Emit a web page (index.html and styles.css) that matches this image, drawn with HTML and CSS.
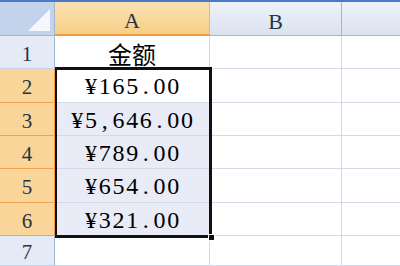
FILE: index.html
```html
<!DOCTYPE html>
<html>
<head>
<meta charset="utf-8">
<link rel="stylesheet" href="styles.css">
</head>
<body>
<div class="sheet">
  <div class="topbar"></div>
  <div class="grid">
    <div class="corner"><div class="tri"></div></div>
    <div class="colhead active">A</div>
    <div class="colhead">B</div>
    <div class="colhead last"></div>

    <div class="rowhead">1</div>
    <div class="cell title">金额</div>
    <div class="cell"></div>
    <div class="cell last"></div>

    <div class="rowhead active">2</div>
    <div class="cell num">¥165<span class="p">.</span>00</div>
    <div class="cell"></div>
    <div class="cell last"></div>

    <div class="rowhead active">3</div>
    <div class="cell num sel">¥5<span class="p">,</span>646<span class="p">.</span>00</div>
    <div class="cell"></div>
    <div class="cell last"></div>

    <div class="rowhead active">4</div>
    <div class="cell num sel">¥789<span class="p">.</span>00</div>
    <div class="cell"></div>
    <div class="cell last"></div>

    <div class="rowhead active">5</div>
    <div class="cell num sel">¥654<span class="p">.</span>00</div>
    <div class="cell"></div>
    <div class="cell last"></div>

    <div class="rowhead active">6</div>
    <div class="cell num sel">¥321<span class="p">.</span>00</div>
    <div class="cell"></div>
    <div class="cell last"></div>

    <div class="rowhead">7</div>
    <div class="cell"></div>
    <div class="cell"></div>
    <div class="cell last"></div>
  </div>
  <div class="selection"><div class="handle"></div></div>
</div>
</body>
</html>
```
FILE: styles.css
```css
* { box-sizing: border-box; }
html, body { margin: 0; padding: 0; background: #fff; }
body { width: 400px; height: 266px; overflow: hidden; }
.sheet { position: relative; width: 400px; height: 266px; overflow: hidden; }
.topbar { height: 2px; background: #4a7ac6; }
.grid {
  display: grid;
  grid-template-columns: 55px 155px 132px 58px;
  grid-template-rows: 34px 33px 34px 33px 33px 34px 33px 30px;
}
.corner {
  position: relative;
  background: #c3d3ec;
  border-right: 1px solid #9eb6ce;
  border-bottom: 1px solid #9eb6ce;
}
.tri {
  position: absolute;
  right: 4px; bottom: 4px;
  width: 0; height: 0;
  border-left: 22px solid transparent;
  border-bottom: 22px solid #f4f7fb;
}
.colhead {
  display: flex; align-items: center; justify-content: center;
  padding-top: 6px;
  font-family: "Liberation Serif", serif;
  font-size: 22px;
  color: #273445;
  background: linear-gradient(#eef2f9, #dbe3ef);
  border-right: 1px solid #9eb6ce;
  border-bottom: 1px solid #9eb6ce;
}
.colhead.active {
  background: linear-gradient(#fae2b4, #f7cf86);
  border-bottom: 2px solid #f29b3e;
  border-right: 1px solid #f1b463;
}
.colhead.last { border-right: none; }
.rowhead {
  display: flex; align-items: center; justify-content: center;
  padding-top: 4px;
  font-family: "Liberation Serif", serif;
  font-size: 21px;
  color: #273445;
  background: #e4ebf6;
  border-right: 1px solid #9eb6ce;
  border-bottom: 1px solid #c5d2e3;
}
.rowhead.active {
  background: #f9d599;
  border-right: 1px solid #f29b3e;
  border-bottom: 1px solid #f2a34b;
}
.cell {
  display: flex; align-items: center; justify-content: center;
  border-right: 1px solid #d3dae6;
  border-bottom: 1px solid #d3dae6;
  font-family: "Liberation Serif", serif;
  font-size: 24px;
  color: #000;
  padding-top: 2px;
}
.cell.num { letter-spacing: 1.7px; padding-left: 2px; }
.cell.num .p { padding: 0 3px; }
.cell.last { border-right: none; }
.cell.sel { background: #e9ebf6; }
.cell.title {
  font-family: "Noto Sans CJK SC", sans-serif;
  font-size: 24px;
  font-weight: 400;
  padding-top: 3px;
}
.selection {
  position: absolute;
  left: 55px; top: 67px;
  width: 157px; height: 171px;
  border: 3px solid #111;
  border-left-width: 2px;
}
.handle {
  position: absolute;
  right: -6px; bottom: -6px;
  width: 7px; height: 7px;
  background: #111;
  border: 1px solid #fff;
}
```
